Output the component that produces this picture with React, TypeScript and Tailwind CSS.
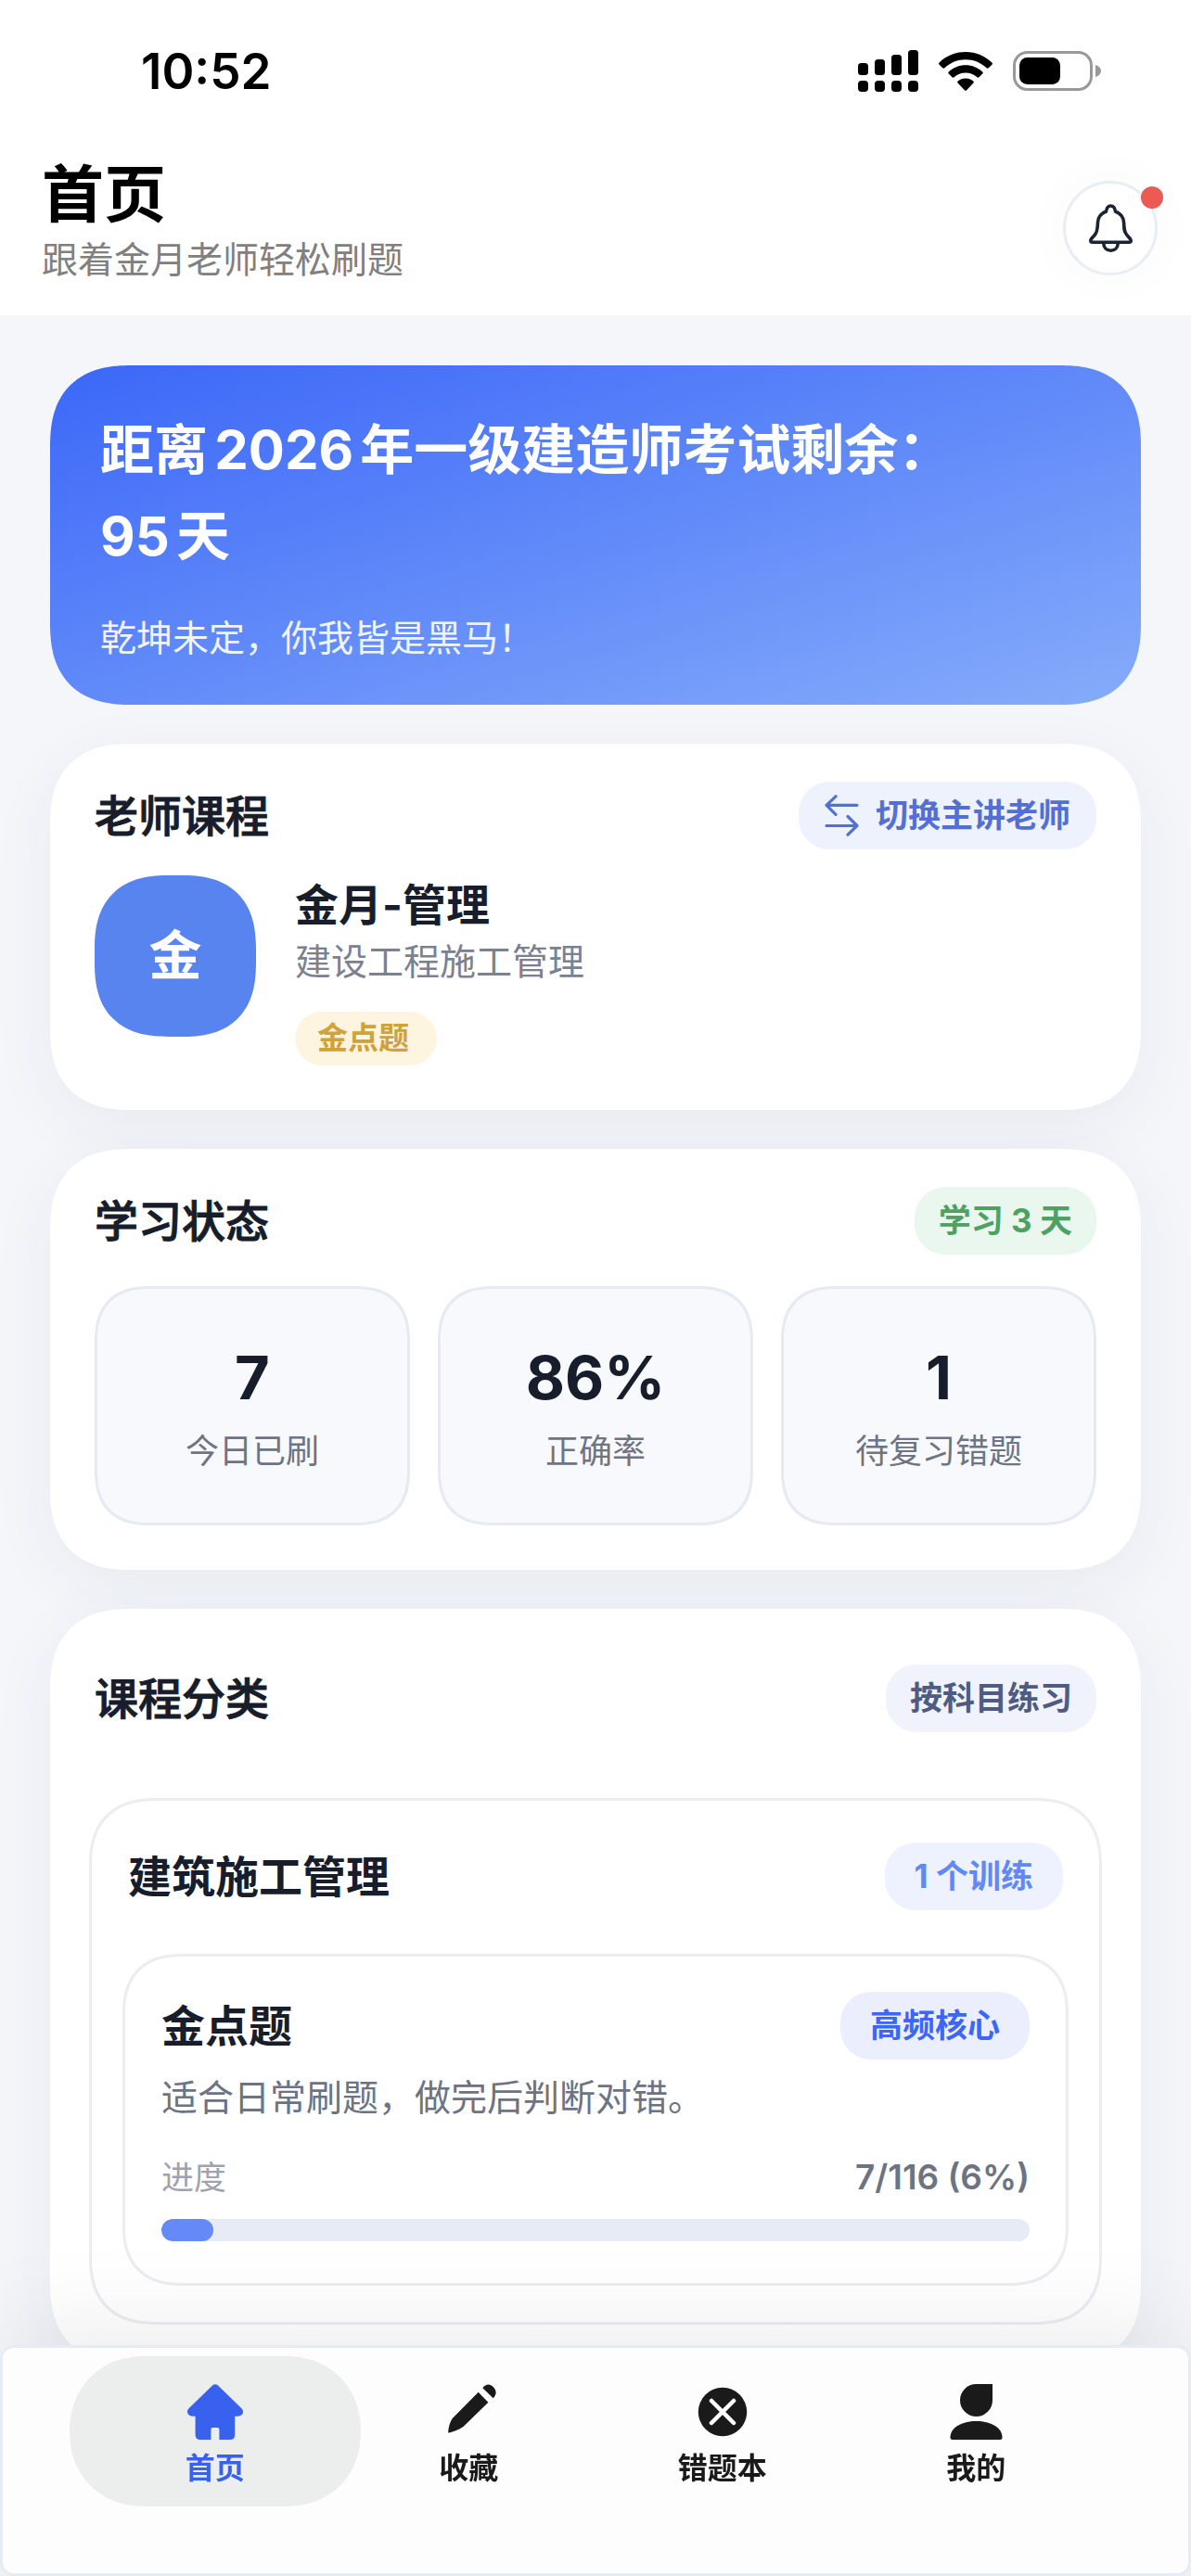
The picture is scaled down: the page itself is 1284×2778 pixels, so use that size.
import type { ReactNode } from 'react';

const STATS = [
  { label: '今日已刷', value: '7' },
  { label: '正确率', value: '86%' },
  { label: '待复习错题', value: '1' },
];

const TABS = [
  { id: 'home', label: '首页', icon: <HomeIcon /> },
  { id: 'favorites', label: '收藏', icon: <PencilIcon /> },
  { id: 'mistakes', label: '错题本', icon: <MistakesIcon /> },
  { id: 'profile', label: '我的', icon: <ProfileIcon /> },
];

const DONE = 7;
const TOTAL = 116;

export default function App() {
  const percent = Math.round((DONE / TOTAL) * 100);

  return (
    <div className="min-h-screen bg-[#f4f6fa] font-['Inter','Noto_Sans_CJK_SC',sans-serif] text-[#171d2a] [text-autospace:normal]">
      <header className="bg-white">
        <StatusBar />
        <div className="flex items-end justify-between pt-6 pb-[35px] pl-[45px] pr-9">
          <div>
            <h1 className="text-[67px] leading-[90px] font-bold text-black">首页</h1>
            <p className="text-[39px] leading-[50px] text-[#808080]">跟着金月老师轻松刷题</p>
          </div>
          <button
            aria-label="通知"
            className="relative mb-2 flex size-[102px] items-center justify-center rounded-full border-3 border-[#e8edf6] bg-white shadow-[0_0_60px_rgba(0,0,0,0.03)]"
          >
            <BellIcon />
            <span className="absolute -right-[9px] top-[3px] size-6 rounded-full bg-[#eb5a53]" />
          </button>
        </div>
      </header>

      <main className="flex flex-col gap-[42px] px-[54px] pt-[54px] pb-[220px]">
        <section className="rounded-[88px] bg-linear-to-br/srgb from-[#3b67f8] to-[#86acfa] px-[54px] pt-[45px] pb-[45px] text-white [corner-shape:superellipse(1.3)]">
          <h2 className="text-[58px] leading-[93px] font-bold">
            距离2026年一级建造师考试剩余：
            <br />
            95天
          </h2>
          <p className="mt-[36px] text-[39px] leading-[54px] text-white/90">乾坤未定，你我皆是黑马！</p>
        </section>

        <Card className="px-12 pt-[41px] pb-12">
          <CardHeader title="老师课程">
            <button className="flex h-[73px] cursor-pointer items-center gap-[18px] rounded-[33px] bg-[#eef2fd] px-7 text-[35px] font-bold text-[#546fd3]">
              <SwapIcon />
              切换主讲老师
            </button>
          </CardHeader>
          <div className="mt-7 flex gap-[42px]">
            <div className="flex size-[174px] items-center justify-center rounded-[80px] bg-[#5884ef] text-[57px] font-bold text-white [corner-shape:superellipse(1.3)]">
              金
            </div>
            <div>
              <h3 className="text-[47px] leading-[64px] font-bold">金月-管理</h3>
              <p className="text-[39px] leading-[58px] text-[#7b8190]">建设工程施工管理</p>
              <span className="mt-[25px] flex h-[58px] w-fit items-center rounded-[29px] bg-[#fdf5df] pl-6 pr-[30px] text-[33px] font-bold text-[#cfa23a]">
                金点题
              </span>
            </div>
          </div>
        </Card>

        <Card className="px-12 pt-[41px] pb-12">
          <CardHeader title="学习状态">
            <Pill className="bg-[#eaf7ef] px-[26px] text-[#4ea163]">学习 3 天</Pill>
          </CardHeader>
          <dl className="mt-[34px] grid grid-cols-3 gap-[30px]">
            {STATS.map(s => (
              <div
                key={s.label}
                className="flex flex-col-reverse rounded-[60px] border-3 border-[#e5eaf3] bg-[#f8f9fd] pt-[54px] pb-[50px] text-center [corner-shape:superellipse(1.3)]"
              >
                <dt className="mt-[10px] text-[36px] leading-[54px] text-[#6e7483]">{s.label}</dt>
                <dd className="text-[65px] leading-[84px] font-bold">{s.value}</dd>
              </div>
            ))}
          </dl>
        </Card>

        <Card className="px-[42px] pt-[60px] pb-[42px]">
          <div className="px-[6px]">
            <CardHeader title="课程分类">
              <Pill className="bg-[#f0f3fb] px-[26px] text-[#4f5b80]">按科目练习</Pill>
            </CardHeader>
          </div>

          <div className="mt-[71px] rounded-[74px] border-3 border-[#ececf2] px-[33px] pt-[45px] pb-[39px] [corner-shape:superellipse(1.3)]">
            <div className="flex items-center justify-between px-[6px]">
              <h3 className="text-[47px] leading-[73px] font-bold">建筑施工管理</h3>
              <Pill className="bg-[#eef2fe] px-[32px] text-[#6288f5]">1 个训练</Pill>
            </div>

            <article className="mt-[47px] rounded-[66px] border-3 border-[#ececf2] px-[39px] pt-[38px] pb-[45px] [corner-shape:superellipse(1.3)]">
              <div className="flex items-center justify-between">
                <h4 className="text-[47px] leading-[73px] font-bold">金点题</h4>
                <Pill className="bg-[#ebeffd] px-[32px] text-[#3c66fb]">高频核心</Pill>
              </div>
              <p className="mt-[12px] text-[39px] leading-[58px] text-[#6d7383]">适合日常刷题，做完后判断对错。</p>
              <div className="mt-[30px] flex items-center justify-between leading-[54px]">
                <span className="text-[35px] text-[#9fa3b0]">进度</span>
                <span className="text-[37px] font-semibold text-[#6d7383]">
                  {DONE}/{TOTAL} ({percent}%)
                </span>
              </div>
              <div
                role="progressbar"
                aria-label="进度"
                aria-valuenow={percent}
                className="mt-[18px] h-6 overflow-hidden rounded-full bg-[#e7ebf5]"
              >
                <div className="h-full rounded-full bg-[#658af7]" style={{ width: `${percent}%` }} />
              </div>
            </article>
          </div>
        </Card>
      </main>

      <nav className="fixed inset-x-0 bottom-0 grid grid-cols-4 rounded-[15px] border-3 border-[#e6ecf5] bg-[#fdfdfd] px-[92px] pt-[9px] pb-[72px] shadow-[0_0_120px_rgba(0,0,0,0.1)]">
        {TABS.map(tab => (
          <a
            key={tab.id}
            href={`#${tab.id}`}
            aria-current={tab.id === 'home' ? 'page' : undefined}
            className={`-mx-5 flex flex-col items-center gap-2 rounded-[81px] pt-[30px] pb-[18px] [corner-shape:superellipse(1.1)] ${
              tab.id === 'home' ? 'bg-[#eceeed] text-[#3961ef]' : 'text-[#1a1a1a]'
            }`}
          >
            {tab.icon}
            <span className="text-[32px] leading-[46px] font-bold">{tab.label}</span>
          </a>
        ))}
      </nav>
    </div>
  );
}

function Card({ className, children }: { className: string; children: ReactNode }) {
  return (
    <section
      className={`rounded-[88px] bg-white shadow-[0_18px_72px_rgba(30,50,100,0.06)] [corner-shape:superellipse(1.3)] ${className}`}
    >
      {children}
    </section>
  );
}

function CardHeader({ title, children }: { title: string; children: ReactNode }) {
  return (
    <div className="flex items-center justify-between">
      <h2 className="text-[47px] leading-[73px] font-medium [-webkit-text-stroke:1px_currentColor]">{title}</h2>
      {children}
    </div>
  );
}

function Pill({ className, children }: { className: string; children: ReactNode }) {
  return (
    <span className={`flex h-[73px] items-center rounded-[33px] text-[35px] font-bold ${className}`}>
      {children}
    </span>
  );
}

function StatusBar() {
  return (
    <div className="flex h-[141px] items-center justify-between pt-3 pl-[152px] pr-[97px]">
      <time className="text-[53px] leading-[60px] font-semibold text-black">10:52</time>
      <div className="flex items-center gap-[22px]">
        <svg width="65" height="45" viewBox="0 0 65 45" aria-hidden="true">
          <rect x="0" y="14" width="11" height="13" rx="3.5" />
          <rect x="18" y="10" width="11" height="17" rx="3.5" />
          <rect x="36" y="5" width="11" height="22" rx="3.5" />
          <rect x="54" y="0" width="11" height="27" rx="3.5" />
          <rect x="0" y="33" width="11" height="12" rx="4" />
          <rect x="18" y="33" width="11" height="12" rx="4" />
          <rect x="36" y="33" width="11" height="12" rx="4" />
          <rect x="54" y="33" width="11" height="12" rx="4" />
        </svg>
        <svg width="58" height="42" viewBox="0 0 58 42" aria-hidden="true">
          <path d="M29 0C18 0 8 4.300 .6 11.500c-.7.700-.7 1.500 0 2.200l3.600 3.600c.6.600 1.500.6 2.200 0C12.500 11.600 20.300 8.300 29 8.300s16.500 3.300 22.600 9c.7.600 1.600.6 2.200 0l3.600-3.600c.7-.7.7-1.500 0-2.200C50 4.300 40 0 29 0z" />
          <path d="M29 14.300c-7 0-13.400 2.700-18.200 7.100-.7.600-.7 1.500 0 2.200l3.700 3.600c.6.600 1.400.6 2.100 0 3.300-2.900 7.600-4.700 12.400-4.700s9.100 1.800 12.400 4.700c.7.600 1.500.6 2.100 0l3.700-3.600c.7-.7.7-1.600 0-2.200C42.400 17 36 14.300 29 14.300z" />
          <path d="M29 28.600c-3.200 0-6 1.100-8.300 2.900-.7.600-.7 1.400-.1 2.100l7.300 7.600c.7.700 1.500.7 2.200 0l7.300-7.600c.6-.7.6-1.500-.1-2.100-2.300-1.800-5.100-2.900-8.300-2.900z" />
        </svg>
        <svg width="95" height="43" viewBox="0 0 95 43" aria-hidden="true">
          <rect x="1.500" y="1.500" width="83" height="40" rx="14" fill="none" stroke="#999" strokeWidth="3" />
          <rect x="7" y="7" width="44" height="29" rx="8.500" />
          <path d="M89 15c3.600 1 6 3.600 6 6.500s-2.400 5.500-6 6.500z" fill="#999" />
        </svg>
      </div>
    </div>
  );
}

function BellIcon() {
  return (
    <svg
      width="47"
      height="52"
      viewBox="0 0 47 52"
      fill="none"
      stroke="#1c2333"
      strokeWidth="3.600"
      strokeLinejoin="round"
      aria-hidden="true"
    >
      <path d="M18.500 8C13 10 9.800 14 9.500 20C9.300 27 9 30 6.500 33C4.500 35.500 1.800 37.500 1.800 39.500C1.800 40.800 2.600 41.200 4 41.200H43C44.400 41.200 45.200 40.800 45.200 39.500C45.200 37.500 42.500 35.500 40.500 33C38 30 37.800 27 37.600 20C37.200 14 34 10 28.500 8C28 4.500 26 2 23.500 2C21 2 19 4.500 18.500 8Z" />
      <path d="M15.800 42.500C15.800 47 19 50.200 23.500 50.200S31.200 47 31.200 42.500" />
    </svg>
  );
}

function SwapIcon() {
  return (
    <svg
      width="37"
      height="45"
      viewBox="0 0 37 45"
      fill="none"
      stroke="currentColor"
      strokeWidth="3.200"
      strokeLinecap="round"
      strokeLinejoin="round"
      aria-hidden="true"
    >
      <path d="M35 11.300H2M12 1.800L2 11.300L12 21.300" />
      <path d="M2 33.500H35M25 23.500L35 33.500L25 43.200" />
    </svg>
  );
}

function HomeIcon() {
  return (
    <svg width="60" height="60" viewBox="0 0 60 60" fill="currentColor" aria-hidden="true">
      <path d="M27.300 1.300Q30 -.9 32.700 1.300L58.200 26C62 29.500 59.500 34.800 54 34.800H51.200V54.500Q51.200 60 45.700 60H34.400V49Q34.400 47 32.400 47H27.400Q25.400 47 25.400 49V60H14.100Q8.600 60 8.600 54.500V34.800H6C.5 34.800-2 29.500 1.800 26Z" />
    </svg>
  );
}

function PencilIcon() {
  return (
    <svg width="60" height="60" viewBox="0 0 60 60" fill="currentColor" aria-hidden="true">
      <path d="M40.700 8.700L51.400 19.700L25.500 45C22.500 48 14 51.500 9.200 52.600Q8 52.800 8.200 51.500C8.600 46 10.200 40.500 12.800 37Z" />
      <path d="M45.300 4.300C49 -.8 53.500 -.4 56.700 3C60.400 6.700 60.800 10.800 56.700 15.300Z" />
    </svg>
  );
}

function MistakesIcon() {
  return (
    <svg width="60" height="60" viewBox="0 0 60 60" aria-hidden="true">
      <circle cx="30" cy="30" r="26.200" fill="currentColor" />
      <path d="M18 18L42 42M42 18L18 42" stroke="#fff" strokeWidth="4.500" strokeLinecap="round" />
    </svg>
  );
}

function ProfileIcon() {
  return (
    <svg width="60" height="60" viewBox="0 0 60 60" fill="currentColor" aria-hidden="true">
      <path d="M48 0V17.500A17.500 17.500 0 1 1 30.500 0Z" />
      <path d="M30.500 40C46 40 58.500 47 58.500 57.500Q58.500 60 56 60H5Q2.500 60 2.500 57.500C2.500 47 15 40 30.500 40Z" />
    </svg>
  );
}
